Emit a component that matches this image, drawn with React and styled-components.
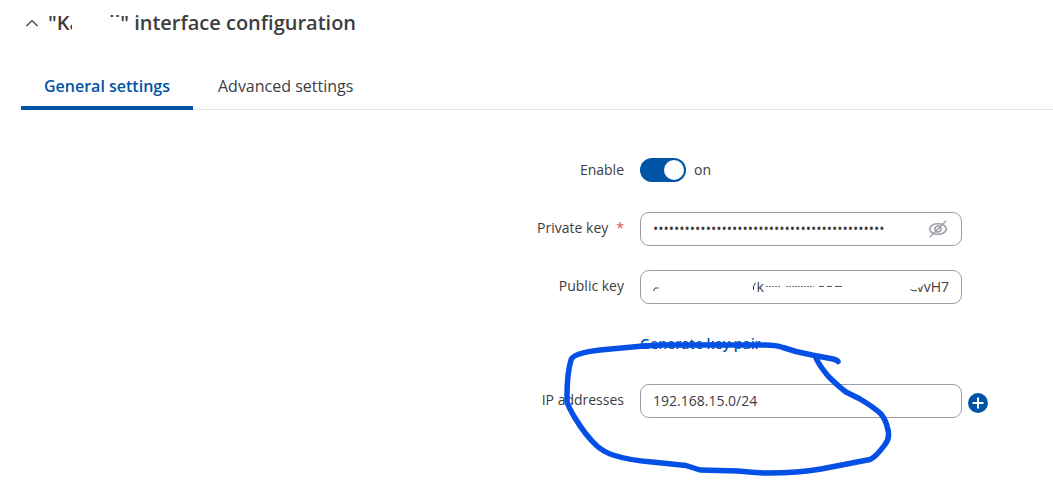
import React, { useState } from 'react';
import styled, { createGlobalStyle } from 'styled-components';

const GlobalStyle = createGlobalStyle`
  * { box-sizing: border-box; }
  body {
    margin: 0;
    background: #fff;
    color: #3d3d3f;
    font-family: "Open Sans", "Noto Sans", sans-serif;
    font-size: 14px;
    line-height: 20px;
  }
  button, input { font: inherit; color: inherit; }
`;

const Page = styled.main`
  padding: 9px 0 0 21px;
`;

const Header = styled.header`
  display: flex;
  align-items: center;
  gap: 8px;
  padding-left: 3px;
`;

const CollapseButton = styled.button`
  display: flex;
  width: 16px;
  height: 28px;
  padding: 0;
  align-items: center;
  justify-content: center;
  border: 0;
  background: none;
`;

const Title = styled.h1`
  position: relative;
  margin: 0;
  font-size: 20px;
  line-height: 28px;
  font-weight: 600;
`;

const HiddenName = styled.span`
  display: inline-block;
  width: 28px;
`;

// white brush strokes that hide private text
const Eraser = styled.svg`
  position: absolute;
  inset: 0;
  width: 100%;
  height: 100%;
  pointer-events: none;
`;

const Tabs = styled.nav`
  display: flex;
  gap: 2px;
  margin-top: 27px;
  border-bottom: 1px solid #e3e3e5;
`;

const Tab = styled.button`
  height: 46px;
  margin-bottom: -1px;
  padding: 2px 23px 0;
  border: 0;
  border-bottom: 4px solid ${({ $active }) => ($active ? '#0054a6' : 'transparent')};
  background: none;
  color: ${({ $active }) => ($active ? '#0054a6' : 'inherit')};
  font-size: 16px;
  font-weight: ${({ $active }) => ($active ? 600 : 400)};
`;

const FormArea = styled.div`
  position: relative;
`;

const Form = styled.form`
  display: grid;
  gap: 24px;
  padding: 44px 65px 72px 0;
`;

const Row = styled.div`
  display: grid;
  grid-template-columns: 1fr 348px;
  column-gap: 16px;
  min-height: 34px;
  align-items: center;
`;

const LinkRow = styled(Row)`
  min-height: 32px;
`;

const Label = styled.label`
  padding-bottom: 2px;
  text-align: right;
`;

const Required = styled.span`
  margin-left: 8px;
  color: #d9534f;
`;

const Control = styled.div`
  display: flex;
  grid-column: 2;
  align-items: center;
  gap: 6px;
`;

const Field = styled.div`
  position: relative;
  width: 322px;
`;

const Input = styled.input`
  display: block;
  width: 100%;
  height: 34px;
  padding: 0 ${({ $icon }) => ($icon ? 40 : 12)}px 2px 12px;
  border: 1px solid #9c9ca8;
  border-radius: 9px;
  background: #fff;
  text-align: ${({ $end }) => ($end ? 'right' : 'left')};
`;

const IconButton = styled.button`
  position: absolute;
  top: 7px;
  right: 14px;
  width: 20px;
  height: 20px;
  padding: 0;
  border: 0;
  background: none;
`;

const SwitchLabel = styled.label`
  display: flex;
  align-items: center;
  gap: 8px;
  padding-bottom: 2px;
`;

const Switch = styled.input`
  appearance: none;
  width: 46px;
  height: 24px;
  margin: 0;
  padding: 2px;
  border-radius: 12px;
  background: ${({ checked }) => (checked ? '#0054a6' : '#9c9ca8')};

  &::before {
    content: '';
    display: block;
    width: 20px;
    height: 20px;
    margin-left: ${({ checked }) => (checked ? 22 : 0)}px;
    border-radius: 50%;
    background: #fff;
  }
`;

const Link = styled.a`
  color: #0054a6;
  font-weight: 600;
  text-decoration: none;
`;

const AddButton = styled.button`
  width: 20px;
  height: 20px;
  margin-top: 4px;
  padding: 0;
  border: 0;
  background: none;

  svg { display: block; }
`;

// hand-drawn loop lying over the lower rows
const Marker = styled.svg`
  position: absolute;
  top: 230px;
  right: 157px;
  width: 336px;
  height: 140px;
  pointer-events: none;
`;

const PUBLIC_KEY = 'k' + '\u00a0'.repeat(42) + 'vvH7';

function App() {
  const [tab, setTab] = useState('general');
  const [enabled, setEnabled] = useState(true);
  const [visible, setVisible] = useState(false);
  const [privateKey, setPrivateKey] = useState('x'.repeat(44));
  const [address, setAddress] = useState('192.168.15.0/24');

  return (
    <>
      <GlobalStyle />
      <Page>
        <Header>
          <CollapseButton aria-label="Collapse">
            <svg width="14" height="10" viewBox="0 0 14 10" fill="none" stroke="#3d3d3f" strokeWidth="1.2">
              <path d="M1.5 8 7 2.5 12.5 8" />
            </svg>
          </CollapseButton>
          <Title>
            "Ka<HiddenName />ll" interface configuration
            <Eraser>
              <path d="M20 8H72V24H24V15H20Z" fill="#fff" />
            </Eraser>
          </Title>
        </Header>

        <Tabs>
          <Tab $active={tab === 'general'} onClick={() => setTab('general')}>General settings</Tab>
          <Tab $active={tab === 'advanced'} onClick={() => setTab('advanced')}>Advanced settings</Tab>
        </Tabs>

        <FormArea>
          <Form>
            <Row>
              <Label htmlFor="enable">Enable</Label>
              <Control>
                <SwitchLabel>
                  <Switch id="enable" type="checkbox" checked={enabled} onChange={() => setEnabled(!enabled)} />
                  {enabled ? 'on' : 'off'}
                </SwitchLabel>
              </Control>
            </Row>

            <Row>
              <Label htmlFor="private-key">Private key<Required>*</Required></Label>
              <Control>
                <Field>
                  <Input
                    id="private-key"
                    type={visible ? 'text' : 'password'}
                    value={privateKey}
                    onChange={(e) => setPrivateKey(e.target.value)}
                    $icon
                  />
                  <IconButton type="button" aria-label="Show key" onClick={() => setVisible(!visible)}>
                    <svg width="20" height="20" viewBox="0 0 20 20" fill="none" stroke="#9c9ca8" strokeWidth="1.5">
                      <path d="M1.5 10C3.5 3 16.5 3 18.5 10C16.5 17 3.5 17 1.5 10Z" />
                      <circle cx="10" cy="10" r="3" />
                      <path d="M2 18 18 2" />
                    </svg>
                  </IconButton>
                </Field>
              </Control>
            </Row>

            <Row>
              <Label htmlFor="public-key">Public key</Label>
              <Control>
                <Field>
                  <Input id="public-key" value={PUBLIC_KEY} readOnly $end />
                  <Eraser viewBox="0 0 322 34">
                    <path d="M268 8H284V15L278 18H268ZM112 8H125V12H112Z" fill="#fff" />
                    <path d="M13.5 21 15 18H18.5M113.5 20Q112.5 16 115.5 13M270.5 19.5Q273 21.5 277 20.5" fill="none" stroke="#3d3d3f" />
                    <path d="M126 16.5H141M146 16.5H174" fill="none" stroke="#77777d" strokeDasharray="2 1" />
                    <path d="M179 16.5H184M187 16.5H192M195 16.5H202" fill="none" stroke="#55555b" />
                  </Eraser>
                </Field>
              </Control>
            </Row>

            <LinkRow>
              <Control><Link href="#generate">Generate key pair</Link></Control>
            </LinkRow>

            <Row>
              <Label htmlFor="ip-addresses">IP addresses</Label>
              <Control>
                <Field>
                  <Input id="ip-addresses" value={address} onChange={(e) => setAddress(e.target.value)} />
                </Field>
                <AddButton type="button" aria-label="Add address">
                  <svg width="20" height="20" viewBox="0 0 20 20">
                    <circle cx="10" cy="10" r="10" fill="#0054a6" />
                    <path d="M4.5 10H15.5M10 4.5V15.5" stroke="#fff" strokeWidth="2" />
                  </svg>
                </AddButton>
              </Control>
            </Row>
          </Form>

          <Marker viewBox="560 340 336 140" fill="none" stroke="#0450e6" strokeWidth="5.5" strokeLinecap="round" strokeLinejoin="round">
            <path d="M838 361.500Q837 360 833 359L812 355 796 351.500 783 347.500Q776 345 765 345H664L643 346 600 350Q573 353 571 360Q567 374 567 395V402Q569 408 575 418Q586 436 597 446Q604 452 613 455Q628 460 652 462L686 465.500 700 470 738 471Q755 473 768 473Q798 473 821 469L870 459.500Q876 457 885 444.500Q890 438 888 430Q886 420 881 414Q875 408 860 399L846 392Q838 386 828 376Q819 365 816 358" />
          </Marker>
        </FormArea>
      </Page>
    </>
  );
}

export default App;
